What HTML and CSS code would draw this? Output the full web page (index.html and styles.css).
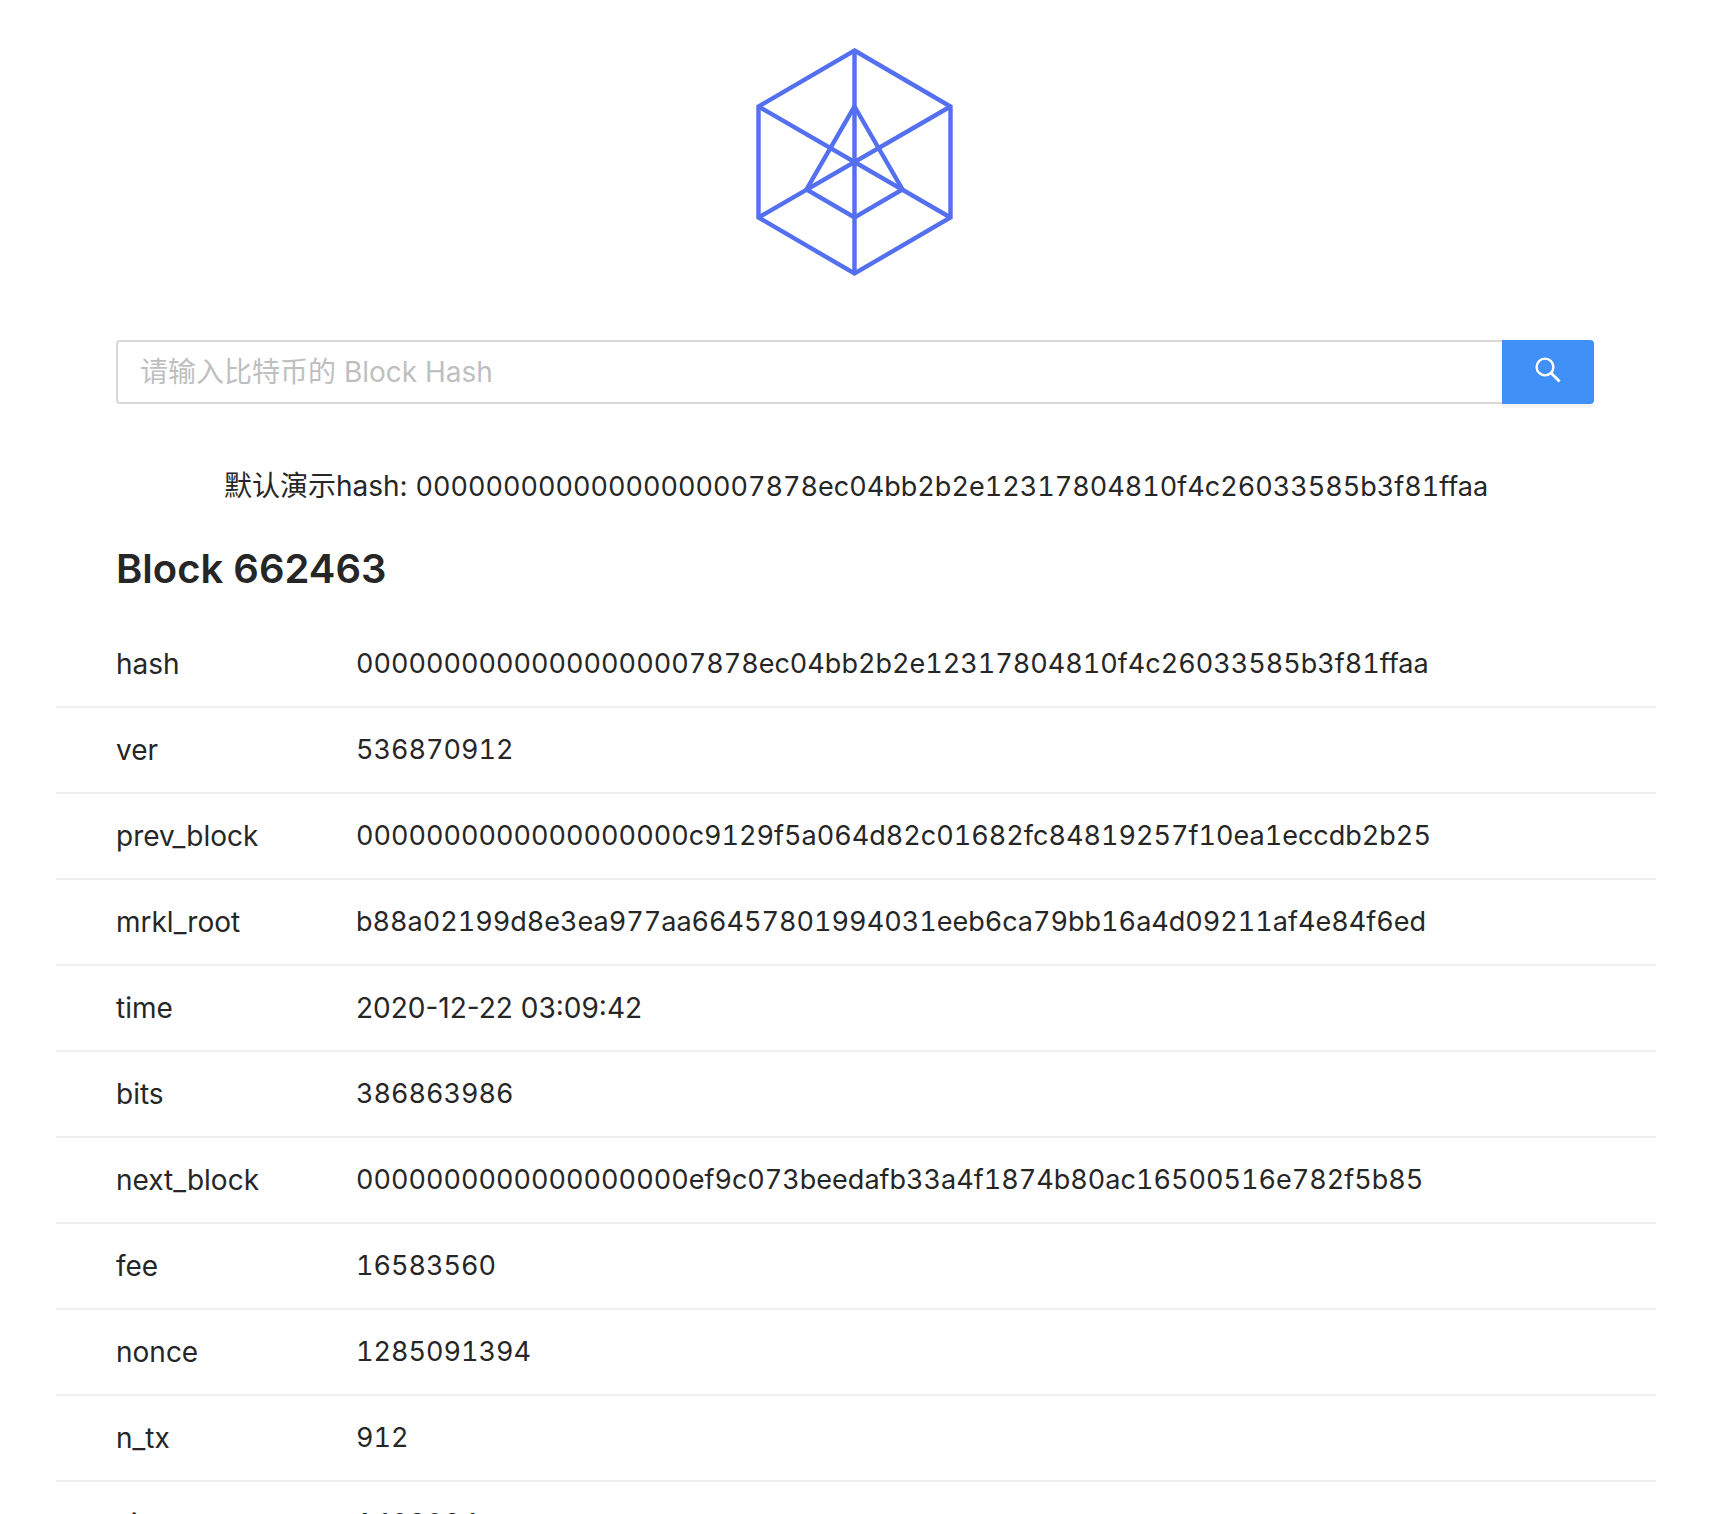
FILE: index.html
```html
<!DOCTYPE html>
<html lang="zh-CN">
<head>
<meta charset="utf-8">
<title>Block 662463</title>
<link rel="stylesheet" href="styles.css">
</head>
<body>
<main class="page">
  <header class="brand">
    <svg class="logo" viewBox="0 0 200 232" fill="none" stroke="currentColor" stroke-width="4.4" role="img" aria-label="Logo">
      <path d="M99.5 3.5 195.5 59.5V170.5L99.5 226.500 3.500 170.500V59.500Z"/>
      <path d="M99.500 3.500V226.500M3.500 59.500 195.500 170.500M195.500 59.500 3.500 170.500"/>
      <path d="M99.500 59.500 147.500 142.500 99.500 170.500 51.500 142.500Z"/>
    </svg>
  </header>
  <form class="search" role="search">
    <input class="search-input" type="text" aria-label="Block Hash" placeholder="请输入比特币的 Block Hash">
    <button class="search-button" type="button" aria-label="搜索">
      <svg class="search-icon" viewBox="0 0 28 28" fill="none" stroke="currentColor" stroke-width="2.4">
        <circle cx="11" cy="11" r="8.4"/>
        <path d="M17 17 25.6 25.6" stroke-width="2.8"/>
      </svg>
    </button>
  </form>
  <p class="demo">默认演示hash: <span class="value">00000000000000000007878ec04bb2b2e12317804810f4c26033585b3f81ffaa</span></p>
  <h1 class="title">Block 662463</h1>
  <table class="details">
    <tbody>
      <tr><th scope="row">hash</th><td class="value">00000000000000000007878ec04bb2b2e12317804810f4c26033585b3f81ffaa</td></tr>
      <tr><th scope="row">ver</th><td class="value">536870912</td></tr>
      <tr><th scope="row">prev_block</th><td class="value">0000000000000000000c9129f5a064d82c01682fc84819257f10ea1eccdb2b25</td></tr>
      <tr><th scope="row">mrkl_root</th><td class="value">b88a02199d8e3ea977aa66457801994031eeb6ca79bb16a4d09211af4e84f6ed</td></tr>
      <tr><th scope="row">time</th><td>2020-12-22 03:09:42</td></tr>
      <tr><th scope="row">bits</th><td class="value">386863986</td></tr>
      <tr><th scope="row">next_block</th><td class="value">0000000000000000000ef9c073beedafb33a4f1874b80ac16500516e782f5b85</td></tr>
      <tr><th scope="row">fee</th><td class="value">16583560</td></tr>
      <tr><th scope="row">nonce</th><td class="value">1285091394</td></tr>
      <tr><th scope="row">n_tx</th><td class="value">912</td></tr>
      <tr><th scope="row">size</th><td class="value">1408084</td></tr>
    </tbody>
  </table>
</main>
</body>
</html>
```
FILE: styles.css
```css
* { box-sizing: border-box; }
body {
  margin: 0;
  background: #fff;
  color: #262626;
  font: 28px/44px Inter, "Noto Sans CJK SC", sans-serif;
}
.page { padding: 47px 66px 0 56px; }
.brand { display: flex; justify-content: center; margin: 0 62px 0 60px; }
.logo { width: 200px; height: 232px; color: #5470f0; }
.search { display: flex; margin: 61px 62px 0 60px; height: 64px; }
.search-input {
  flex: 1;
  min-width: 0;
  padding: 0 22px;
  border: 2px solid #d9d9d9;
  border-right: 0;
  border-radius: 4px 0 0 4px;
  background: #fff;
  color: inherit;
  font: inherit;
  outline: 0;
}
.search-input::placeholder { color: #bfbfbf; opacity: 1; }
.search-button {
  display: flex;
  align-items: center;
  justify-content: center;
  width: 92px;
  padding: 0 0 4px;
  border: 0;
  border-radius: 0 4px 4px 0;
  background: #4090f7;
  color: #fff;
  box-shadow: 0 4px 0 rgba(0, 0, 0, .045);
}
.search-icon { width: 28px; height: 28px; }
.demo { margin: 60px 0 0; text-align: center; }
.value { font-size: 27px; font-variant-numeric: tabular-nums; }
.title { margin: 32px 60px 25px; font-size: 40px; line-height: 56px; font-weight: 600; }
.details { width: 100%; border-collapse: separate; border-spacing: 0; }
.details th,
.details td { padding: 20px 0; border-bottom: 2px solid #f0f0f0; text-align: left; font-weight: 400; }
.details th { width: 300px; padding-left: 60px; }
```
